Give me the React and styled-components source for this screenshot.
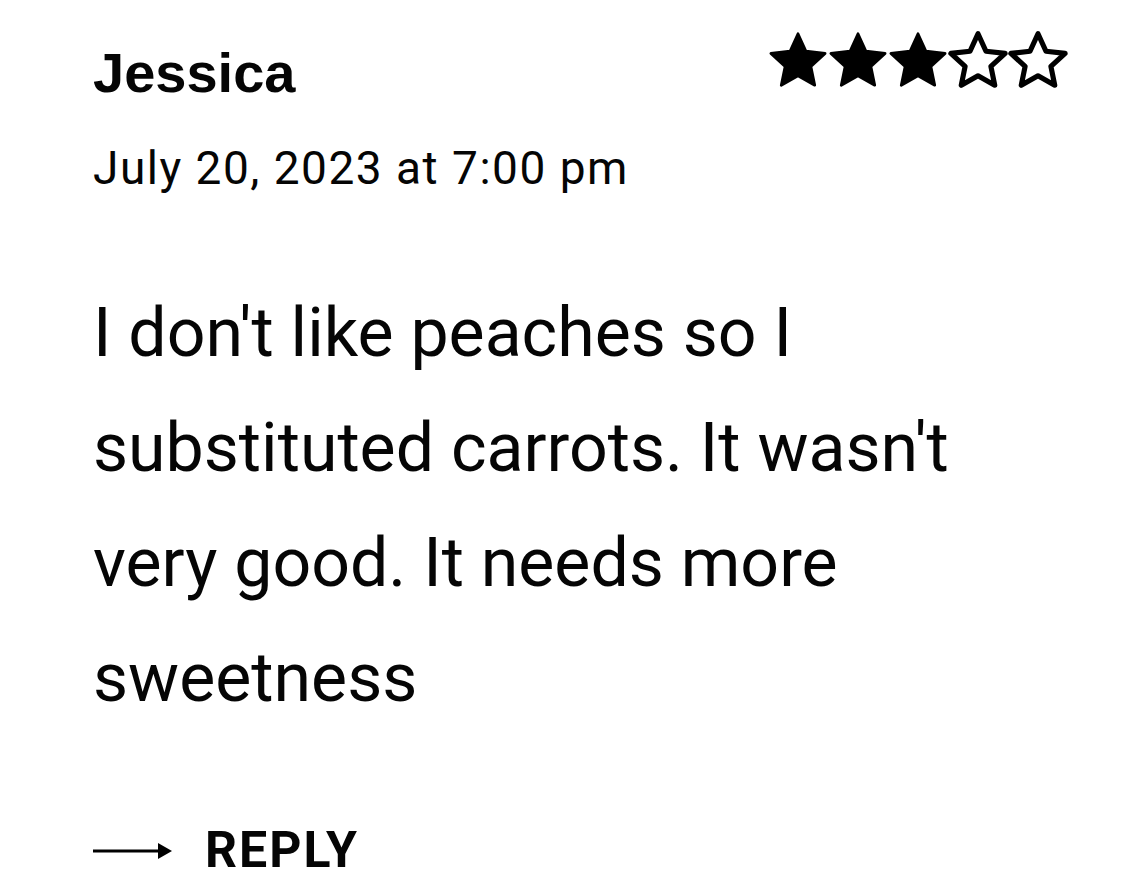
import React from 'react';
import styled, { createGlobalStyle } from 'styled-components';

const GlobalStyle = createGlobalStyle`
  html, body {
    margin: 0;
    padding: 0;
    background: #ffffff;
  }
  body {
    font-family: Roboto, "Liberation Sans", sans-serif;
    color: #050505;
  }
`;

const Card = styled('div')`
  width: 1148px;
  height: 892px;
  box-sizing: border-box;
  padding: 28px 80px 0 93px;
  background: #ffffff;
  overflow: hidden;
`;

const HeaderRow = styled('div')`
  display: flex;
  justify-content: space-between;
  align-items: flex-start;
`;

const Name = styled('div')`
  font-family: "Liberation Sans", Arial, sans-serif;
  font-size: 56px;
  font-weight: 700;
  line-height: 90px;
`;

const Stars = styled('div')`
  display: flex;
  padding-top: 3px;
`;

const DateLine = styled('div')`
  font-size: 46px;
  line-height: 60px;
  letter-spacing: 1.5px;
  margin-top: 20px;
`;

const Body = styled('p')`
  margin: 78px 0 0;
  font-size: 68px;
  line-height: 115px;
  max-width: 900px;
`;

const ReplyRow = styled('div')`
  display: flex;
  align-items: center;
  gap: 33px;
  margin-top: 85px;
`;

const ReplyLabel = styled('span')`
  font-size: 50px;
  font-weight: 700;
  letter-spacing: 2px;
`;

const STAR_PATH =
  'M10 0 L12.94 6.45 L19.99 7.26 L14.76 12.05 L16.17 18.99 L10 15.5 L3.83 18.99 L5.24 12.05 L0.01 7.26 L7.06 6.45 Z';

const Star = ({ filled }) => (
  <svg width="60" height="57" viewBox="-1 -1 22 21">
    <path
      d={STAR_PATH}
      fill={filled ? '#000' : 'none'}
      stroke="#000"
      strokeWidth={filled ? 1 : 1.9}
      strokeLinejoin="round"
    />
  </svg>
);

const Arrow = () => (
  <svg width="79" height="22" viewBox="0 0 79 22">
    <line x1="0" y1="12" x2="68" y2="12" stroke="#000" strokeWidth="3" />
    <path d="M65 4 L79 12 L65 20 Z" fill="#000" />
  </svg>
);

export default function App() {
  const rating = 3;
  return (
    <>
      <GlobalStyle />
      <Card>
        <HeaderRow>
          <Name>Jessica</Name>
          <Stars>
            {[1, 2, 3, 4, 5].map((n) => (
              <Star key={n} filled={n <= rating} />
            ))}
          </Stars>
        </HeaderRow>
        <DateLine>July 20, 2023 at 7:00 pm</DateLine>
        <Body>
          I don't like peaches so I substituted carrots. It wasn't very good. It
          needs more sweetness
        </Body>
        <ReplyRow>
          <Arrow />
          <ReplyLabel>REPLY</ReplyLabel>
        </ReplyRow>
      </Card>
    </>
  );
}
